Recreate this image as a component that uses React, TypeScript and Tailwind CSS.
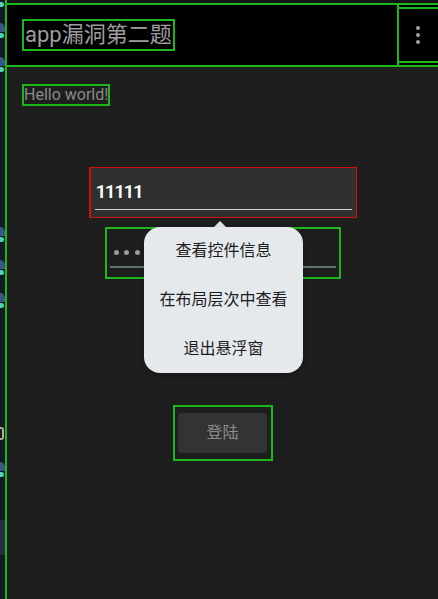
import React from "react";

const font = { fontFamily: "Roboto, 'Noto Sans CJK SC', sans-serif" };

const Avatar: React.FC<{ top: string }> = ({ top }) => (
  <div className={`absolute left-0 flex flex-col gap-[1px] ${top}`}>
    <div className="w-[5px] h-[9px] bg-[#3b5788] rounded-tr-full" />
    <div className="w-[4px] h-[5px] bg-[#4fd3b0] rounded-r-full" />
  </div>
);

const menuItems = ["查看控件信息", "在布局层次中查看", "退出悬浮窗"];

export default function App() {
  return (
    <div className="flex w-[438px] h-[599px] overflow-hidden bg-[#1e1e1e]" style={font}>
      {/* desktop behind the phone */}
      <div className="relative w-[5px] shrink-0 bg-[#141926]">
        <div className="absolute left-0 top-[2px] w-[4px] h-[5px] bg-[#4fd3b0] rounded-r-full" />
        <Avatar top="top-[23px]" />
        <Avatar top="top-[57px]" />
        <Avatar top="top-[227px]" />
        <Avatar top="top-[260px]" />
        <Avatar top="top-[293px]" />
        <div className="absolute left-0 top-[427px] w-[4px] h-[13px] border-r-2 border-y-2 border-[#b9a98e] rounded-r-[3px]" />
        <Avatar top="top-[462px]" />
        <div className="absolute left-0 top-[520px] w-[5px] h-[35px] bg-[#272b44]" />
      </div>

      <div className="flex-1 flex flex-col border-l-2 border-[#1bb81b] relative">
        <div className="h-[3px] shrink-0 bg-[#151515]" />

        {/* toolbar */}
        <div className="h-[64px] shrink-0 flex bg-black border-y-2 border-[#1bb81b]">
          <div className="flex-1 flex items-center pl-[15px]">
            <div className="border-2 border-[#1bb81b] px-[1px] h-[32px] flex items-center text-[22px] leading-[28px] text-[#9e9e9e]">
              app漏洞第二题
            </div>
          </div>
          <div className="w-[41px] border-l-2 border-[#1bb81b] flex flex-col py-[2px]">
            <div className="flex-1 border-y-2 border-[#1bb81b] flex flex-col items-center justify-center gap-[3px] pr-[1px]">
              <div className="w-[4px] h-[4px] rounded-full bg-[#a0a0a0]" />
              <div className="w-[4px] h-[4px] rounded-full bg-[#a0a0a0]" />
              <div className="w-[4px] h-[4px] rounded-full bg-[#a0a0a0]" />
            </div>
          </div>
        </div>

        {/* content */}
        <div className="flex-1 flex flex-col">
          <div className="flex pl-[15px] pt-[17px]">
            <div className="border-2 border-[#1bb81b] text-[16px] leading-[18px] h-[22px] text-[#8a8a8a]">
              Hello world!
            </div>
          </div>

          <div className="flex flex-col items-center mt-[61px]">
            <div className="w-[268px] h-[51px] bg-[#303030] border border-[#d01010] border-l-2 px-[4px] pt-[12px]">
              <div className="text-[19px] leading-[24px] font-semibold text-white pl-[1px] tracking-[-1.5px]">11111</div>
              <div className="h-px bg-[#cfcfcf] mt-[5px]" />
            </div>

            <div className="w-[236px] h-[52px] border-2 border-[#1bb81b] mt-[9px] px-[3px] pt-[21px]">
              <div className="flex gap-[5.5px] pl-[4px] h-[5px]">
                {[0, 1, 2, 3, 4].map((i) => (
                  <div key={i} className="w-[5px] h-[5px] rounded-full bg-[#9a9a9a]" />
                ))}
              </div>
              <div className="h-[2px] bg-[#5e7673] mt-[11px]" />
            </div>

            <div className="w-[100px] h-[56px] border-2 border-[#1bb81b] mt-[126px] flex items-center justify-center">
              <div className="w-[89px] h-[40px] rounded-[4px] bg-[#333333] flex items-center justify-center text-[16px] text-[#8c8c8c]">
                登陆
              </div>
            </div>
          </div>
        </div>

        {/* floating inspector menu */}
        <div className="absolute left-[137px] top-[221px] w-[159px]">
          <div className="ml-[70px] w-0 h-0 border-x-[6px] border-x-transparent border-b-[6px] border-b-[#e6e9ec]" />
          <div className="h-[146px] rounded-[16px] bg-[#e6e9ec] flex flex-col shadow-[0_2px_6px_rgba(0,0,0,0.25)]">
            {menuItems.map((t) => (
              <div key={t} className="flex-1 flex items-center justify-center text-[16px] text-[#1c1c1c]">
                {t}
              </div>
            ))}
          </div>
        </div>
      </div>
    </div>
  );
}
